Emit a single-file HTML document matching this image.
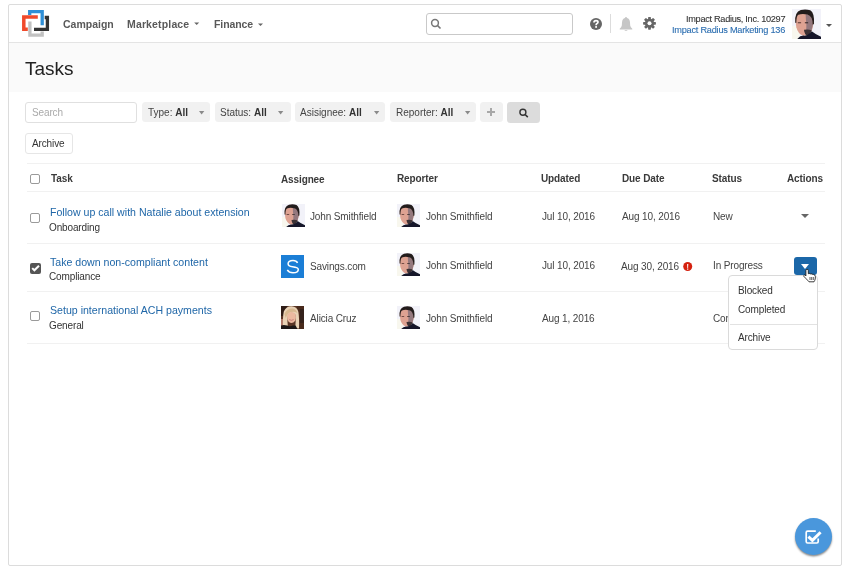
<!DOCTYPE html>
<html><head><meta charset="utf-8">
<style>
*{box-sizing:border-box;margin:0;padding:0}
html,body{width:850px;height:574px;background:#fff;overflow:hidden;font-family:"Liberation Sans",sans-serif;color:#333}
.a{position:absolute}
.t{position:absolute;white-space:nowrap;line-height:1;will-change:transform}
#frame{position:absolute;left:8px;top:4px;width:834px;height:562px;border:1px solid #dcdcdc;border-radius:2px;overflow:hidden}
.nav{font-size:10.5px;font-weight:bold;color:#595959}
.s97{font-size:10px;letter-spacing:-0.13px;margin-top:-0.26px}
.b{font-weight:bold;letter-spacing:-0.12px;color:#3a3a3a !important}
.lnk{font-size:10.6px;color:#2067a8}
.hline{position:absolute;left:27px;width:798px;height:1px;background:#f1f1f1}
.cb{position:absolute;left:30px;width:10px;height:10px;border:1px solid #9a9a9a;border-radius:2px;background:#fff}
.fbtn{position:absolute;top:102px;height:20px;background:#f1f1f1;border-radius:3.5px}
.caret{position:absolute;width:0;height:0;border-left:3px solid transparent;border-right:3px solid transparent;border-top:3px solid #999}
.av{position:absolute;width:23px;height:23px}
</style></head><body>
<div id="frame">
</div>
<svg width="0" height="0" style="position:absolute">
<defs>
<filter id="soft" x="-5%" y="-5%" width="110%" height="110%"><feGaussianBlur stdDeviation="0.35"/></filter>
<symbol id="john" viewBox="0 0 23 23">
<g filter="url(#soft)">
  <rect width="23" height="23" fill="#f2f2f9"/>
  <rect x="0" y="13" width="6" height="10" fill="#f8f7ee"/>
  <path d="M2.8 9 Q2.6 3.8 6.2 2 Q9.5 0.6 13 1.4 Q16.6 2.8 16.9 8 L16.8 12 Q16.3 16.8 13.8 19.2 Q11.4 20.8 8.6 20.4 Q4.8 19 3.4 14 Z" fill="#dea292"/>
  <path d="M10.8 4 Q15.4 3.6 16.4 8 L16.5 12.5 Q16 16.8 13.6 19.2 L11.8 19.8 Q11 15.5 11.4 12 Q10.9 8 10.8 4 Z" fill="#94787e"/>
  <rect x="4.6" y="10" width="2.6" height="1" fill="#5a3a34" opacity="0.8"/>
  <rect x="10.2" y="10" width="2.6" height="1" fill="#3a2a2a" opacity="0.8"/>
  <path d="M9.5 16 Q12.5 15.4 15.6 16.2 Q14.6 19.8 12.4 20.6 Q10 20.2 9.5 16 Z" fill="#3c3034"/>
  <path d="M2.6 10.5 Q1.8 2.2 7 0.7 Q11 -0.2 14.5 1 Q18 3 17.4 11.5 L16.4 12 Q16.4 5.2 12.2 4.2 Q8 3.4 5 4.4 Q3.4 5.4 3.4 10.8 Z" fill="#241b1a"/>
  <path d="M4.2 23 Q6.4 20.4 9 20.4 Q12 20.8 14.5 18.4 L15.6 17 Q19 19.6 23 21.2 L23 23 Z" fill="#141829"/>
</g>
</symbol>
<symbol id="alicia" viewBox="0 0 23 23">
<g filter="url(#soft)">
  <rect width="23" height="23" fill="#5a3626"/>
  <rect x="0" y="0" width="6" height="10" fill="#2e1a12"/>
  <rect x="16" y="0" width="7" height="23" fill="#4a2a1e"/>
  <rect x="19" y="3" width="4" height="14" fill="#34201a"/>
  <rect x="0" y="13" width="3" height="7" fill="#b07868"/>
  <path d="M2 22 Q1.6 11 2.8 5.5 Q5 0.2 10.5 0.2 Q16 0.4 17.4 6 Q18.4 12 18 22.5 L14.2 22.5 Q15 15 14.6 9 Q11 5 7 8.5 Q5.8 15 7 22 Z" fill="#e9d2b6"/>
  <path d="M3.5 8 Q6 2 12 2.5 Q15.5 3.5 16.4 7 Q12 4.5 8 7 Q5.5 9 4.8 12 Z" fill="#d8b890"/>
  <path d="M6.2 10 Q7.5 6.2 11 6 Q14 6.4 14.8 9 Q15.3 12.5 14.2 14.8 Q12.5 17.2 10 17 Q7.2 16.6 6.5 13.5 Z" fill="#ecb9a0"/>
  <path d="M8.2 13.6 Q10.4 15 12.6 13.6" fill="none" stroke="#c07070" stroke-width="0.8"/>
  <path d="M0 23 L0 19.5 Q3 18.6 6.2 19.6 Q9 20.8 11.8 19.4 L14.6 19.4 Q15.6 21 16.4 23 Z" fill="#1c1818"/>
</g>
</symbol>
</defs></svg>


<!-- header -->
<div class="a" style="left:9px;top:42px;width:832px;height:1px;background:#e4e4e4"></div>
<div class="a" style="left:9px;top:43px;width:832px;height:49px;background:#fafafa"></div>

<svg class="a" style="left:18px;top:6px" width="34" height="34" viewBox="18 6 34 34">
  <polyline points="29.7,15 29.7,11.6 42.2,11.6 42.2,25.3" fill="none" stroke="#2f8fd6" stroke-width="3.3"/>
  <polyline points="44.7,17.5 47.4,17.5 47.4,29.3 34,29.3" fill="none" stroke="#333" stroke-width="3.3"/>
  <polyline points="37.8,16.9 23.8,16.9 23.8,29.3 27.8,29.3" fill="none" stroke="#f04a2b" stroke-width="3.5"/>
  <polyline points="29.9,21.4 29.9,35.1 42.2,35.1 42.2,31.5" fill="none" stroke="#c2c2c2" stroke-width="3.3"/>
</svg>

<div class="t nav" style="left:62.8px;top:19.2px">Campaign</div>
<div class="t nav" style="left:126.8px;top:19.2px;letter-spacing:0.15px">Marketplace</div>
<svg class="a" style="left:194px;top:22px" width="6" height="4" viewBox="0 0 6 4"><path d="M0.2 0.4 L5.2 0.4 L2.7 3 Z" fill="#666"/></svg>
<div class="t nav" style="left:214px;top:19.2px;letter-spacing:-0.1px">Finance</div>
<svg class="a" style="left:258px;top:22.5px" width="6" height="4" viewBox="0 0 6 4"><path d="M0 0.4 L5 0.4 L2.5 3 Z" fill="#666"/></svg>

<div class="a" style="left:426px;top:13px;width:147px;height:22px;border:1px solid #c9c9c9;border-radius:3px;background:#fff"></div>
<svg class="a" style="left:430px;top:18px" width="12" height="12" viewBox="0 0 12 12">
  <circle cx="5" cy="5" r="3.4" fill="none" stroke="#777" stroke-width="1.5"/>
  <line x1="7.4" y1="7.4" x2="10.5" y2="10.5" stroke="#777" stroke-width="1.6"/>
</svg>

<svg class="a" style="left:589px;top:17px" width="14" height="14" viewBox="0 0 14 14">
  <circle cx="7" cy="7" r="6" fill="#666"/>
  <path d="M5 5.5 Q5 3.5 7 3.5 Q9 3.5 9 5.1 Q9 6 8 6.6 Q7.1 7.1 7.1 8.2" fill="none" stroke="#fff" stroke-width="1.75"/>
  <rect x="6.2" y="9.1" width="1.8" height="1.7" fill="#fff"/>
</svg>
<div class="a" style="left:610px;top:14px;width:1px;height:19px;background:#dcdcdc"></div>
<svg class="a" style="left:618px;top:16px" width="16" height="16" viewBox="0 0 16 16">
  <path d="M8 1 Q9 1 9 2 Q11.8 2.8 12 6.5 L12.2 9.5 Q12.5 11.5 14.3 12.8 L14.3 13.6 L1.7 13.6 L1.7 12.8 Q3.5 11.5 3.8 9.5 L4 6.5 Q4.2 2.8 7 2 Q7 1 8 1 Z" fill="#c6c6c6"/>
  <path d="M6.3 14.2 Q8 16 9.7 14.2 Z" fill="#c6c6c6"/>
</svg>
<svg class="a" style="left:642px;top:16px" width="15" height="15" viewBox="0 0 15 15">
  <g fill="#666" transform="translate(7.5 7.3)">
    <circle r="4.6"/>
    <rect x="-1.4" y="-6.4" width="2.8" height="12.8" rx="0.6"/>
    <rect x="-1.4" y="-6.4" width="2.8" height="12.8" rx="0.6" transform="rotate(45)"/>
    <rect x="-1.4" y="-6.4" width="2.8" height="12.8" rx="0.6" transform="rotate(90)"/>
    <rect x="-1.4" y="-6.4" width="2.8" height="12.8" rx="0.6" transform="rotate(135)"/>
  </g>
  <circle cx="7.5" cy="7.3" r="2" fill="#fff"/>
</svg>

<div class="t" style="right:64.9px;top:15.2px;font-size:9.2px;letter-spacing:-0.3px;color:#333;-webkit-text-stroke:0.1px #333">Impact Radius, Inc. 10297</div>
<div class="t" style="right:64.9px;top:25.6px;font-size:9.2px;letter-spacing:-0.24px;color:#2a6db0;-webkit-text-stroke:0.1px #2a6db0">Impact Radius Marketing 136</div>

<svg class="a" style="left:792px;top:9px" width="29" height="30" viewBox="0 0 23 23" preserveAspectRatio="none"><use href="#john"/></svg>
<div class="caret" style="left:826px;top:24px;border-top-color:#555;border-left-width:3px;border-right-width:3px"></div>

<div class="t" style="left:25px;top:59px;font-size:19px;color:#222">Tasks</div>

<!-- filters -->
<div class="a" style="left:25px;top:102px;width:111.5px;height:21px;border:1px solid #e0e0e0;border-radius:3px;background:#fff"></div>
<div class="t s97" style="left:31.5px;top:108.5px;color:#aaa">Search</div>

<div class="fbtn" style="left:142px;width:68px"></div>
<div class="t" style="left:147.6px;top:107.9px;font-size:10px;color:#444">Type: <b style="color:#333">All</b></div>
<svg class="a" style="left:199px;top:110.5px" width="6" height="4" viewBox="0 0 6 4"><path d="M0 0 L5.3 0 L2.65 3.4 Z" fill="#8a8a8a"/></svg>
<div class="fbtn" style="left:215px;width:75.5px"></div>
<div class="t" style="left:220.2px;top:107.9px;font-size:10px;color:#444">Status: <b style="color:#333">All</b></div>
<svg class="a" style="left:278px;top:110.5px" width="6" height="4" viewBox="0 0 6 4"><path d="M0 0 L5.3 0 L2.65 3.4 Z" fill="#8a8a8a"/></svg>
<div class="fbtn" style="left:294.5px;width:90px"></div>
<div class="t" style="left:300.1px;top:107.9px;font-size:10px;color:#444">Asisignee: <b style="color:#333">All</b></div>
<svg class="a" style="left:373.5px;top:110.5px" width="6" height="4" viewBox="0 0 6 4"><path d="M0 0 L5.3 0 L2.65 3.4 Z" fill="#8a8a8a"/></svg>
<div class="fbtn" style="left:389.5px;width:86px"></div>
<div class="t" style="left:395.5px;top:107.9px;font-size:10px;color:#444">Reporter: <b style="color:#333">All</b></div>
<svg class="a" style="left:464.5px;top:110.5px" width="6" height="4" viewBox="0 0 6 4"><path d="M0 0 L5.3 0 L2.65 3.4 Z" fill="#8a8a8a"/></svg>
<div class="fbtn" style="left:480px;width:22.5px"></div>
<div class="a" style="left:487px;top:111px;width:8px;height:2.2px;background:#a8a8a8"></div>
<div class="a" style="left:489.9px;top:108px;width:2.2px;height:8px;background:#a8a8a8"></div>
<div class="fbtn" style="left:507px;width:33px;height:20.5px;background:#dcdcdc"></div>
<svg class="a" style="left:518px;top:107px" width="12" height="12" viewBox="0 0 12 12">
  <circle cx="4.9" cy="5.3" r="3" fill="none" stroke="#333" stroke-width="1.4"/>
  <line x1="7.1" y1="7.5" x2="9.8" y2="10.1" stroke="#333" stroke-width="1.6"/>
</svg>

<div class="a" style="left:25px;top:133px;width:47.5px;height:20.5px;border:1px solid #e6e6e6;border-radius:3px;background:#fff"></div>
<div class="t s97" style="left:32.4px;top:139.5px;color:#333">Archive</div>

<!-- table -->
<div class="hline" style="top:163px"></div>
<div class="cb" style="top:174px"></div>
<div class="t s97 b" style="left:50.6px;top:174.3px;color:#333">Task</div>
<div class="t s97 b" style="left:281.3px;top:175px;color:#333">Assignee</div>
<div class="t s97 b" style="left:397px;top:174.3px;color:#333">Reporter</div>
<div class="t s97 b" style="left:540.9px;top:174.3px;color:#333">Updated</div>
<div class="t s97 b" style="left:621.9px;top:174.3px;color:#333">Due Date</div>
<div class="t s97 b" style="left:712.3px;top:174.3px;color:#333">Status</div>
<div class="t s97 b" style="left:787.1px;top:174.3px;color:#333">Actions</div>
<div class="hline" style="top:191px"></div>

<!-- row 1 -->
<div class="cb" style="top:213px"></div>
<div class="t lnk" style="left:50px;top:207.4px">Follow up call with Natalie about extension</div>
<div class="t s97" style="left:49px;top:222.8px;color:#333">Onboarding</div>
<svg class="av" style="left:281.6px;top:203.6px" viewBox="0 0 23 23"><use href="#john"/></svg>
<div class="t s97" style="left:310.3px;top:212px;color:#444">John Smithfield</div>
<svg class="av" style="left:396.5px;top:203.6px" viewBox="0 0 23 23"><use href="#john"/></svg>
<div class="t s97" style="left:425.9px;top:212px;color:#444">John Smithfield</div>
<div class="t s97" style="left:541.5px;top:212.2px;color:#444">Jul 10, 2016</div>
<div class="t s97" style="left:621.6px;top:212px;color:#444">Aug 10, 2016</div>
<div class="t s97" style="left:712.8px;top:212px;color:#444">New</div>
<div class="caret" style="left:800.5px;top:213.5px;border-top:4.5px solid #666;border-left-width:4.5px;border-right-width:4.5px"></div>
<div class="hline" style="top:243px"></div>

<!-- row 2 -->
<div class="a" style="left:30px;top:263px;width:10.5px;height:10.5px;background:#555;border-radius:2px"></div>
<svg class="a" style="left:30px;top:263px" width="11" height="11" viewBox="0 0 11 11"><polyline points="2.2,5.1 4.4,7.3 9,2.7" fill="none" stroke="#fff" stroke-width="2"/></svg>
<div class="t lnk" style="left:50px;top:256.6px">Take down non-compliant content</div>
<div class="t s97" style="left:49px;top:271.9px;color:#333">Compliance</div>
<svg class="a" style="left:281px;top:254.7px" width="23" height="23" viewBox="0 0 23 23"><rect width="23" height="23" fill="#1b7ed6"/><path d="M16.6 7.8 Q15.4 5.5 12 5.5 Q7.1 5.5 7.1 8.8 Q7.1 11.2 11.5 11.8 Q17.3 12.6 17.3 14.5 Q17.3 17.8 12 17.8 Q8 17.8 6.3 14.9" fill="none" stroke="#fff" stroke-width="1.5"/></svg>
<div class="t s97" style="left:310.3px;top:262.3px;color:#444">Savings.com</div>
<svg class="av" style="left:396.5px;top:253px" viewBox="0 0 23 23"><use href="#john"/></svg>
<div class="t s97" style="left:425.9px;top:261px;color:#444">John Smithfield</div>
<div class="t s97" style="left:541.5px;top:261px;color:#444">Jul 10, 2016</div>
<div class="t s97" style="left:621px;top:262.2px;color:#444">Aug 30, 2016</div>
<svg class="a" style="left:683px;top:262px" width="10" height="10" viewBox="0 0 10 10"><circle cx="4.7" cy="4.5" r="4.5" fill="#d5210f"/><path d="M4.1 1.9 L5.3 1.9 L5.1 5.9 L4.3 5.9 Z" fill="#fff"/><rect x="4.1" y="6.5" width="1.2" height="1.2" fill="#fff"/></svg>
<div class="t s97" style="left:712.8px;top:261.2px;color:#444">In Progress</div>
<div class="hline" style="top:291px"></div>

<!-- row 3 -->
<div class="cb" style="top:311px"></div>
<div class="t lnk" style="left:50px;top:305.4px">Setup international ACH payments</div>
<div class="t s97" style="left:49px;top:321.4px;color:#333">General</div>
<svg class="av" style="left:281.2px;top:306px" viewBox="0 0 23 23"><use href="#alicia"/></svg>
<div class="t s97" style="left:310.3px;top:314.6px;color:#444">Alicia Cruz</div>
<svg class="av" style="left:396.5px;top:305.5px" viewBox="0 0 23 23"><use href="#john"/></svg>
<div class="t s97" style="left:425.9px;top:314.3px;color:#444">John Smithfield</div>
<div class="t s97" style="left:541.5px;top:314.6px;color:#444">Aug 1, 2016</div>
<div class="t s97" style="left:712.5px;top:314.6px;color:#444">Completed</div>
<div class="hline" style="top:343px"></div>

<!-- action button + menu -->
<div class="a" style="left:794px;top:257px;width:23px;height:18px;background:#1b67a8;border-radius:3px"></div>
<div class="caret" style="left:801px;top:264px;border-top:5px solid #fff;border-left-width:4.5px;border-right-width:4.5px"></div>

<div class="a" style="left:728px;top:275px;width:89.5px;height:75px;border:1px solid #dadada;border-radius:4px;background:#fff"></div>
<div class="a" style="left:729.5px;top:324px;width:87px;height:1px;background:#e2e2e2"></div>
<div class="t s97" style="left:738.3px;top:286.5px;color:#333">Blocked</div>
<div class="t s97" style="left:738.3px;top:305.6px;color:#333">Completed</div>
<div class="t s97" style="left:738.3px;top:333.2px;color:#333">Archive</div>

<!-- cursor -->
<svg class="a" style="left:800px;top:265px" width="18" height="20" viewBox="0 0 18 20">
  <path d="M5.9 11 L5.9 5.6 Q5.9 4.3 7.1 4.3 Q8.3 4.3 8.3 5.6 L8.3 8.7 Q9.3 8.1 10.2 8.9 Q11.2 8.4 12.2 9.3 Q13.3 8.9 14.2 9.9 Q15.4 10.1 15.4 11.6 L15.2 14 Q14.8 15.7 14 16.8 L9 16.8 Q7.5 15.1 6 13.6 L4 11.5 Q3.3 10.3 4.4 9.9 Q5.2 9.8 5.9 11 Z" fill="#fff" stroke="#1a1a1a" stroke-width="0.85"/>
  <line x1="10" y1="12" x2="10" y2="15" stroke="#1a1a1a" stroke-width="0.7"/>
  <line x1="11.7" y1="12" x2="11.7" y2="15" stroke="#1a1a1a" stroke-width="0.7"/>
  <line x1="13.3" y1="12" x2="13.3" y2="15" stroke="#1a1a1a" stroke-width="0.7"/>
</svg>

<!-- FAB -->
<div class="a" style="left:795px;top:518px;width:37px;height:37px;border-radius:50%;background:#4a97dc;box-shadow:0 1.5px 2px rgba(0,0,0,0.45)"></div>
<svg class="a" style="left:803px;top:527px" width="20" height="20" viewBox="0 0 20 20">
  <path d="M12.8 4.1 L4.6 4.1 Q3.2 4.1 3.2 5.5 L3.2 14.6 Q3.2 16 4.6 16 L13.8 16 Q15.2 16 15.2 14.6 L15.2 11.5" fill="none" stroke="#fff" stroke-width="1.7"/>
  <polyline points="5.4,9.6 9.4,13.4 17.6,5.2" fill="none" stroke="#fff" stroke-width="2.9"/>
</svg>
</body></html>
